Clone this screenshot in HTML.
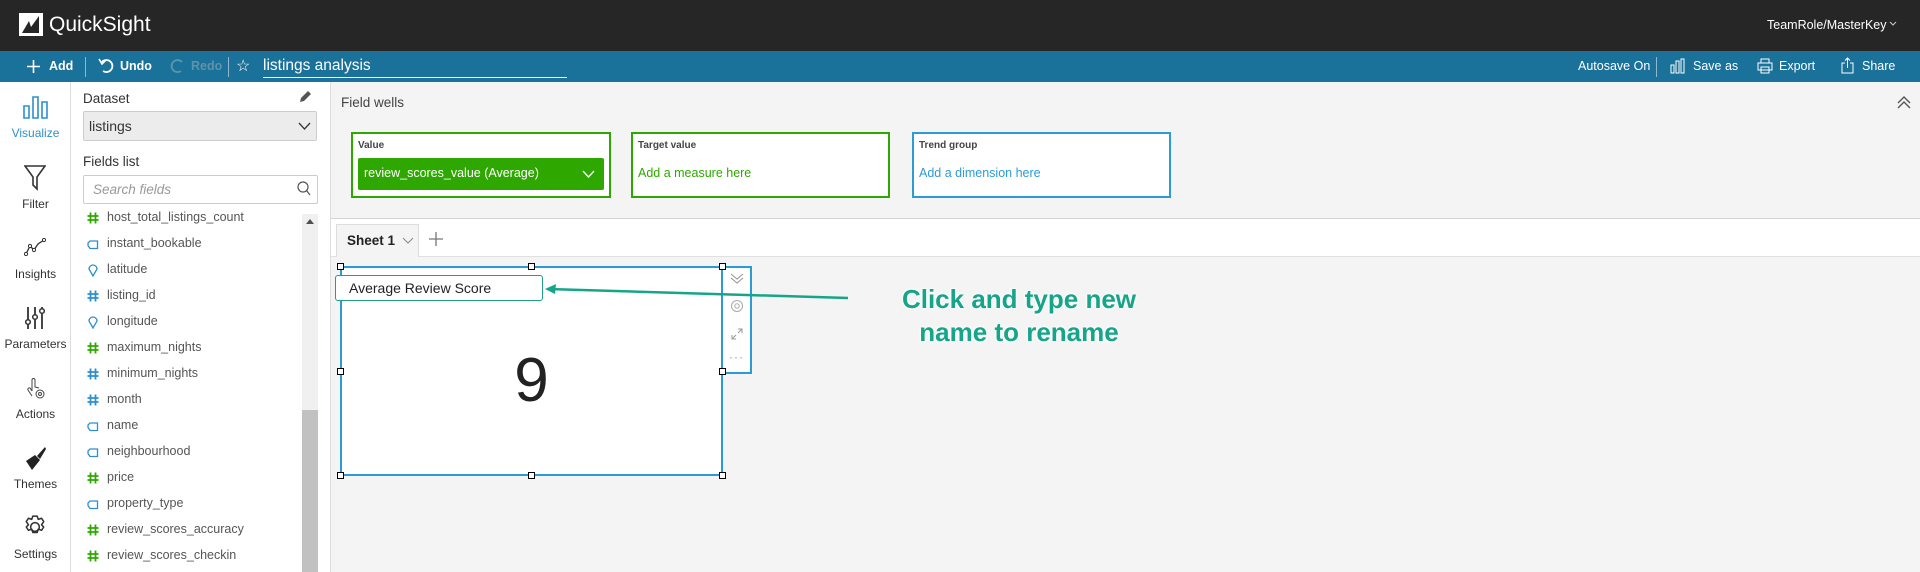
<!DOCTYPE html>
<html><head><meta charset="utf-8"><style>
*{box-sizing:border-box;margin:0;padding:0}
body{width:1920px;height:572px;overflow:hidden;font-family:"Liberation Sans",sans-serif;background:#f4f4f4;position:relative;color:#333}
.a{position:absolute}
.top{left:0;top:0;width:1920px;height:51px;background:#262626}
.bar{left:0;top:51px;width:1920px;height:31px;background:#1a7199}
.w{color:#fff}
.nav{left:0;top:82px;width:71px;height:490px;background:#fff;border-right:1px solid #ddd}
.nl{width:71px;text-align:center;font-size:12px;color:#333;left:0}
.panel{left:71px;top:82px;width:260px;height:490px;background:#fff;border-right:1px solid #ddd}
.it{left:107px;font-size:12.5px;color:#555}
.ic{left:87px}
.box{border:2px solid #2ea800;background:#fff}
</style></head><body>
<div class="a top"></div>
<svg class="a" style="left:19px;top:13px" width="24" height="23" viewBox="0 0 24 23"><rect width="24" height="23" fill="#fff"/><path d="M3 20 L10 8 L12 14 L20 3 L20 20 Z" fill="#262626"/></svg>
<div class="a w" style="left:49px;top:13px;font-size:21px">QuickSight</div>
<div class="a w" style="left:1767px;top:18px;font-size:12.5px">TeamRole/MasterKey</div>
<svg class="a" style="left:1889px;top:21px" width="8" height="6"><path d="M1 1 L4 4 L7 1" stroke="#ccc" fill="none"/></svg>

<div class="a bar"></div>
<svg class="a" style="left:27px;top:60px" width="13" height="13"><path d="M6.5 0V13M0 6.5H13" stroke="#fff" stroke-width="1.6"/></svg>
<div class="a w" style="left:49px;top:59px;font-size:12.5px;font-weight:bold">Add</div>
<div class="a" style="left:85px;top:57px;width:1px;height:20px;background:#8fb8cc"></div>
<svg class="a" style="left:98px;top:58px" width="18" height="16"><path d="M4 4 A6 6 0 1 1 5 13" stroke="#fff" stroke-width="1.8" fill="none"/><path d="M1 1 L4 6 L8 2" stroke="#fff" stroke-width="1.6" fill="none"/></svg>
<div class="a w" style="left:120px;top:59px;font-size:12.5px;font-weight:bold">Undo</div>
<svg class="a" style="left:168px;top:58px" width="18" height="16"><path d="M14 4 A6 6 0 1 0 13 13" stroke="#5f93ad" stroke-width="1.8" fill="none"/></svg>
<div class="a" style="left:191px;top:59px;font-size:12.5px;font-weight:bold;color:#5f93ad">Redo</div>
<div class="a" style="left:228px;top:57px;width:1px;height:20px;background:#8fb8cc"></div>
<div class="a w" style="left:236px;top:56px;font-size:16px">☆</div>
<div class="a w" style="left:263px;top:57px;font-size:15.5px">listings analysis</div>
<div class="a" style="left:263px;top:77px;width:304px;height:1px;background:#fff"></div>
<div class="a w" style="left:1578px;top:59px;font-size:12.5px">Autosave On</div>
<div class="a" style="left:1656px;top:57px;width:1px;height:20px;background:#8fb8cc"></div>
<svg class="a" style="left:1670px;top:58px" width="16" height="16"><path d="M1 7h3v8H1zM6 3h3v12H6zM11 1h3v14h-3z" stroke="#fff" fill="none"/></svg>
<div class="a w" style="left:1693px;top:59px;font-size:12.5px">Save as</div>
<svg class="a" style="left:1757px;top:58px" width="16" height="16"><path d="M4 5V1h8v4M1 5h14v7H1zM4 9h8v6H4z" stroke="#fff" fill="#1a7199"/></svg>
<div class="a w" style="left:1779px;top:59px;font-size:12.5px">Export</div>
<svg class="a" style="left:1841px;top:57px" width="13" height="17"><path d="M4 6H1v10h11V6H9M6.5 11V1M4 3.5L6.5 1 9 3.5" stroke="#fff" fill="none"/></svg>
<div class="a w" style="left:1862px;top:59px;font-size:12.5px">Share</div>

<div class="a nav"></div>
<svg class="a" style="left:23px;top:96px" width="25" height="23"><path d="M1 10h5v12H1zM10 1h5v21h-5zM19 6h5v16h-5z" stroke="#2d8fce" stroke-width="1.6" fill="none"/></svg>
<div class="a nl" style="top:126px;color:#2d8fce">Visualize</div>
<svg class="a" style="left:24px;top:165px" width="22" height="26"><path d="M1 1H21L13 12V24L9 20V12Z" stroke="#333" stroke-width="1.6" fill="none"/></svg>
<div class="a nl" style="top:197px">Filter</div>
<svg class="a" style="left:24px;top:238px" width="22" height="18"><path d="M2 16L6 8L10 12L14 6L20 2" stroke="#333" stroke-width="1.3" fill="none"/><circle cx="2" cy="16" r="1.6" fill="#fff" stroke="#333"/><circle cx="6" cy="8" r="1.6" fill="#fff" stroke="#333"/><circle cx="10" cy="12" r="1.6" fill="#fff" stroke="#333"/><circle cx="20" cy="2" r="1.6" fill="#fff" stroke="#333"/></svg>
<div class="a nl" style="top:267px">Insights</div>
<svg class="a" style="left:25px;top:306px" width="20" height="24"><path d="M3 1V23M10 1V23M17 1V23" stroke="#333" stroke-width="1.8"/><circle cx="3" cy="16" r="2.3" fill="#fff" stroke="#333" stroke-width="1.5"/><circle cx="10" cy="11" r="2.3" fill="#fff" stroke="#333" stroke-width="1.5"/><circle cx="17" cy="5" r="2.3" fill="#fff" stroke="#333" stroke-width="1.5"/></svg>
<div class="a nl" style="top:337px">Parameters</div>
<svg class="a" style="left:25px;top:377px" width="22" height="24"><path d="M7 14V3a1.5 1.5 0 0 1 3 0v7l4 1M7 14l-2-3a1.5 1.5 0 0 0-2 2l4 6" stroke="#444" fill="none"/><circle cx="15" cy="17" r="4" stroke="#444" fill="#fff"/><circle cx="15" cy="17" r="1.5" stroke="#444" fill="none"/></svg>
<div class="a nl" style="top:407px">Actions</div>
<svg class="a" style="left:23px;top:446px" width="24" height="25"><path d="M22 1L14 10L17 13L23 3Z" fill="#222"/><path d="M12 9L3 15L9 24L17 14Z" fill="#222"/></svg>
<div class="a nl" style="top:477px">Themes</div>
<svg class="a" style="left:23px;top:515px" width="24" height="24" viewBox="0 0 22 22"><path d="M9 1h4l1 3 3-1 2 3-2 3 2 2-2 3-3-1-1 3h-4l-1-3-3 1-2-3 2-2-2-3 2-3 3 1z" stroke="#333" stroke-width="1.4" fill="none" stroke-linejoin="round"/><circle cx="11" cy="11" r="4" stroke="#333" stroke-width="1.4" fill="none"/></svg>
<div class="a nl" style="top:547px">Settings</div>

<div class="a panel"></div>
<div class="a" style="left:83px;top:91px;font-size:13.5px;color:#333">Dataset</div>
<svg class="a" style="left:299px;top:90px" width="13" height="13"><path d="M1 12L2 8 9 1 12 4 5 11Z" fill="#555"/></svg>
<div class="a" style="left:83px;top:111px;width:234px;height:30px;background:#ececec;border:1px solid #ccc;border-radius:2px"></div>
<div class="a" style="left:89px;top:118px;font-size:14px;color:#333">listings</div>
<svg class="a" style="left:298px;top:122px" width="13" height="8"><path d="M1 1L6.5 7 12 1" stroke="#333" stroke-width="1.3" fill="none"/></svg>
<div class="a" style="left:83px;top:154px;font-size:13.5px;color:#333">Fields list</div>
<div class="a" style="left:83px;top:175px;width:235px;height:29px;background:#fff;border:1px solid #ccc;border-radius:2px"></div>
<div class="a" style="left:93px;top:182px;font-size:13.5px;color:#999;font-style:italic">Search fields</div>
<svg class="a" style="left:297px;top:181px" width="14" height="15"><circle cx="6" cy="6" r="5" stroke="#555" fill="none" stroke-width="1.2"/><path d="M9.5 9.5L13 14" stroke="#555" stroke-width="1.2"/></svg>
<div class="a" style="left:302px;top:214px;width:16px;height:358px;background:#f0f0f0"></div>
<div class="a" style="left:302px;top:410px;width:16px;height:162px;background:#c1c1c1"></div>
<svg class="a" style="left:306px;top:219px" width="8" height="5"><path d="M0 5L4 0 8 5Z" fill="#505050"/></svg>

<svg width="0" height="0" style="position:absolute"><defs>
<symbol id="h" viewBox="0 0 12 12"><path d="M3.5 0.5V11.5M8.5 0.5V11.5M0.5 4H11.5M0.5 8H11.5" stroke-width="1.8"/></symbol>
<symbol id="s" viewBox="0 0 12 10"><path d="M3 1H10.5V8.5H3L1 5.5V3Z" stroke-width="1.3" fill="none"/></symbol>
<symbol id="p" viewBox="0 0 12 14"><path d="M6 13L2 6A4 4 0 1 1 10 6Z" stroke-width="1.3" fill="none"/></symbol>
</defs></svg>
<svg class="a ic" style="top:212px" width="12" height="12" stroke="#2ea800"><use href="#h"/></svg><div class="a it" style="top:210px">host_total_listings_count</div>
<svg class="a ic" style="top:240px" width="12" height="10" stroke="#2d8fce"><use href="#s"/></svg><div class="a it" style="top:236px">instant_bookable</div>
<svg class="a ic" style="top:263px" width="12" height="14" stroke="#2d8fce"><use href="#p"/></svg><div class="a it" style="top:262px">latitude</div>
<svg class="a ic" style="top:290px" width="12" height="12" stroke="#2d8fce"><use href="#h"/></svg><div class="a it" style="top:288px">listing_id</div>
<svg class="a ic" style="top:315px" width="12" height="14" stroke="#2d8fce"><use href="#p"/></svg><div class="a it" style="top:314px">longitude</div>
<svg class="a ic" style="top:342px" width="12" height="12" stroke="#2ea800"><use href="#h"/></svg><div class="a it" style="top:340px">maximum_nights</div>
<svg class="a ic" style="top:368px" width="12" height="12" stroke="#2d8fce"><use href="#h"/></svg><div class="a it" style="top:366px">minimum_nights</div>
<svg class="a ic" style="top:394px" width="12" height="12" stroke="#2d8fce"><use href="#h"/></svg><div class="a it" style="top:392px">month</div>
<svg class="a ic" style="top:422px" width="12" height="10" stroke="#2d8fce"><use href="#s"/></svg><div class="a it" style="top:418px">name</div>
<svg class="a ic" style="top:448px" width="12" height="10" stroke="#2d8fce"><use href="#s"/></svg><div class="a it" style="top:444px">neighbourhood</div>
<svg class="a ic" style="top:472px" width="12" height="12" stroke="#2ea800"><use href="#h"/></svg><div class="a it" style="top:470px">price</div>
<svg class="a ic" style="top:500px" width="12" height="10" stroke="#2d8fce"><use href="#s"/></svg><div class="a it" style="top:496px">property_type</div>
<svg class="a ic" style="top:524px" width="12" height="12" stroke="#2ea800"><use href="#h"/></svg><div class="a it" style="top:522px">review_scores_accuracy</div>
<svg class="a ic" style="top:550px" width="12" height="12" stroke="#2ea800"><use href="#h"/></svg><div class="a it" style="top:548px">review_scores_checkin</div>

<div class="a" style="left:341px;top:95px;font-size:13.5px;color:#444">Field wells</div>
<svg class="a" style="left:1897px;top:96px" width="14" height="13"><path d="M1 7L7 1 13 7M1 12L7 6 13 12" stroke="#555" stroke-width="1.4" fill="none"/></svg>
<div class="a box" style="left:351px;top:132px;width:260px;height:66px"></div>
<div class="a" style="left:358px;top:140px;font-size:10px;font-weight:bold;color:#444">Value</div>
<div class="a" style="left:358px;top:158px;width:246px;height:32px;background:#2ea800;border-radius:2px"></div>
<div class="a w" style="left:364px;top:166px;font-size:12.5px">review_scores_value (Average)</div>
<svg class="a" style="left:582px;top:170px" width="13" height="8"><path d="M1 1L6.5 7 12 1" stroke="#fff" stroke-width="1.3" fill="none"/></svg>
<div class="a box" style="left:631px;top:132px;width:259px;height:66px"></div>
<div class="a" style="left:638px;top:140px;font-size:10px;font-weight:bold;color:#444">Target value</div>
<div class="a" style="left:638px;top:166px;font-size:12.5px;color:#2ea800">Add a measure here</div>
<div class="a box" style="left:912px;top:132px;width:259px;height:66px;border-color:#2d9bd6"></div>
<div class="a" style="left:919px;top:140px;font-size:10px;font-weight:bold;color:#444">Trend group</div>
<div class="a" style="left:919px;top:166px;font-size:12.5px;color:#2d9bd6">Add a dimension here</div>

<div class="a" style="left:331px;top:218px;width:1589px;height:39px;background:#fff;border-top:1px solid #d5d5d5;border-bottom:1px solid #e0e0e0"></div>
<div class="a" style="left:336px;top:224px;width:83px;height:33px;background:#f4f4f4;border:1px solid #ddd;border-bottom:none"></div>
<div class="a" style="left:347px;top:233px;font-size:13.5px;font-weight:bold;color:#222">Sheet 1</div>
<svg class="a" style="left:402px;top:237px" width="12" height="7"><path d="M1 1L6 6 11 1" stroke="#888" fill="none"/></svg>
<svg class="a" style="left:429px;top:232px" width="14" height="14"><path d="M7 0V14M0 7H14" stroke="#777" stroke-width="1.3"/></svg>

<div class="a" style="left:340px;top:266px;width:383px;height:210px;background:#fff;border:2px solid #2a9bd6"></div>
<div class="a" style="left:721px;top:266px;width:31px;height:108px;background:#fff;border:2px solid #2a9bd6"></div>
<svg class="a" style="left:730px;top:273px" width="14" height="12"><path d="M1 1L7 6 13 1M1 5L7 10 13 5" stroke="#999" stroke-width="1.1" fill="none"/></svg>
<svg class="a" style="left:730px;top:299px" width="14" height="14"><circle cx="7" cy="7" r="5.5" stroke="#aaa" fill="none"/><circle cx="7" cy="7" r="2.2" stroke="#aaa" fill="none"/></svg>
<svg class="a" style="left:731px;top:328px" width="12" height="12"><path d="M7 1H11V5M11 1L7 5M5 11H1V7M1 11L5 7" stroke="#999" fill="none"/></svg>
<div class="a" style="left:729px;top:350px;font-size:12px;color:#999;letter-spacing:1px">···</div>
<div class="a" style="left:335px;top:275px;width:208px;height:26px;background:#fff;border:1px solid #20a088;border-radius:3px"></div>
<div class="a" style="left:349px;top:280px;font-size:14px;color:#222">Average Review Score</div>
<div class="a" style="left:340px;top:345px;width:383px;text-align:center;font-size:62px;color:#222">9</div>
<div class="a" style="left:337px;top:263px;width:7px;height:7px;background:#fff;border:1px solid #000"></div>
<div class="a" style="left:528px;top:263px;width:7px;height:7px;background:#fff;border:1px solid #000"></div>
<div class="a" style="left:719px;top:263px;width:7px;height:7px;background:#fff;border:1px solid #000"></div>
<div class="a" style="left:337px;top:368px;width:7px;height:7px;background:#fff;border:1px solid #000"></div>
<div class="a" style="left:719px;top:368px;width:7px;height:7px;background:#fff;border:1px solid #000"></div>
<div class="a" style="left:337px;top:472px;width:7px;height:7px;background:#fff;border:1px solid #000"></div>
<div class="a" style="left:528px;top:472px;width:7px;height:7px;background:#fff;border:1px solid #000"></div>
<div class="a" style="left:719px;top:472px;width:7px;height:7px;background:#fff;border:1px solid #000"></div>

<svg class="a" style="left:540px;top:280px" width="312" height="24"><path d="M8 9L308 18" stroke="#17a589" stroke-width="2.5"/><path d="M5 9L16 4 15 14Z" fill="#17a589"/></svg>
<div class="a" style="left:870px;top:283px;width:298px;text-align:center;font-size:26px;font-weight:bold;line-height:33px;color:#17a589;text-shadow:0 0 3px #fff,0 0 3px #fff">Click and type new<br>name to rename</div>
</body></html>
